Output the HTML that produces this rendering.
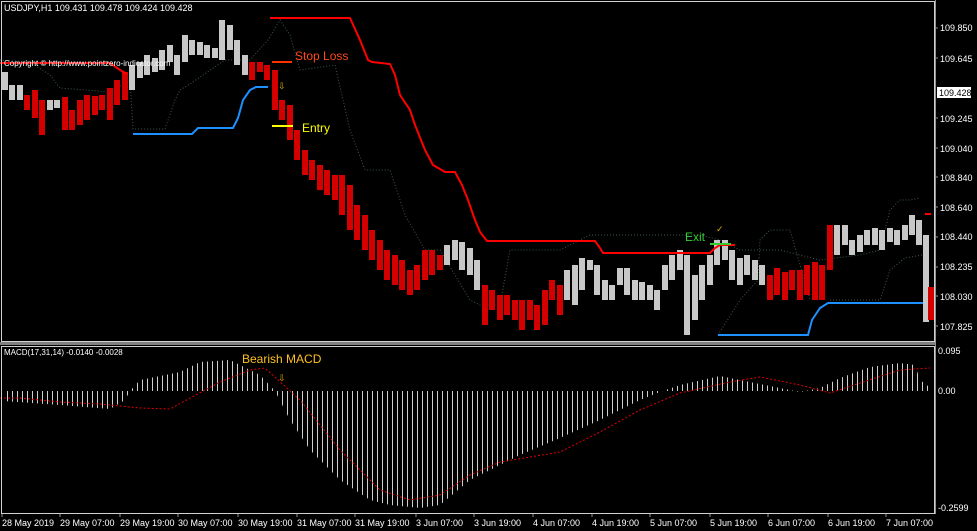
<!DOCTYPE html>
<html><head><meta charset="utf-8"><style>
html,body{margin:0;padding:0;background:#000;width:977px;height:531px;overflow:hidden}
svg{display:block}
text{font-family:"Liberation Sans",sans-serif}
</style></head><body>
<svg width="977" height="531" xmlns="http://www.w3.org/2000/svg">
<defs>
<pattern id="st" x="0" y="0" width="5" height="10" patternUnits="userSpaceOnUse">
<rect x="2" y="0" width="1" height="10" fill="#cfcfcf"/>
</pattern>
</defs>
<rect width="977" height="531" fill="#000"/>
<!-- dotted band -->
<polyline fill="none" stroke="#3a5a4a" stroke-width="1" stroke-dasharray="1,2" points="0,60 30,62 50,75 60,88 110,92 130,80 133,129 165,129 175,100 180,90 190,84 225,60 250,60 268,40 280,20 290,35 300,70 335,65 350,130 365,170 390,170 405,215 425,250 440,250 470,300 480,305 500,305 510,250 560,250 590,235 640,235 700,235 720,240 740,250 780,250 820,260 860,255 880,250 890,210 900,200 910,200 920,198"/>
<polyline fill="none" stroke="#3a5a4a" stroke-width="1" stroke-dasharray="1,2" points="718,335 740,300 758,280 760,240 770,230 790,230 810,300"/>
<polyline fill="none" stroke="#3a5a4a" stroke-width="1" stroke-dasharray="1,2" points="830,300 880,300 890,270 905,258 922,255"/>
<!-- gray bars -->
<path fill="none" stroke="#c8c8c8" stroke-width="6" d="M5 72V90M12 85V100M20 85V100M50 100V110M57 100V108
M132 65V90M140 62V78M147 55V75M155 58V72M162 50V70M170 45V62M177 55V75M185 35V62M192 40V55M200 42V55M207 45V58M215 48V58M222 20V60M230 25V50M237 40V65M245 55V75
M447 245V265M455 240V260M462 242V270M470 248V275M477 260V290
M567 270V300M575 265V305M582 258V290M590 260V270M597 265V295M605 280V300M612 285V300M620 268V285M627 268V295M635 280V300M642 282V300M650 285V300M657 290V310M665 265V290M672 255V280M680 250V270M687 255V335M695 275V320M702 265V300M710 255V285M717 240V265M725 240V260M732 250V280M740 258V285M747 255V275M755 260V280M762 265V285
M837 225V255M845 225V245M852 240V255M860 235V252M867 230V245M875 228V245M882 230V250M890 228V242M897 230V245M905 225V240M912 215V235M919 220V245M926 235V322"/>
<!-- red bars -->
<path fill="none" stroke="#d40000" stroke-width="6" d="M27 95V110M35 90V118M42 100V135M65 97V130M72 110V130M80 100V125M87 95V120M95 96V115M102 95V110M110 88V120M117 80V105M125 72V100
M252 62V80M260 62V72M267 65V80M275 70V110M282 100V120M290 105V140M297 130V160M305 150V175M312 160V180M320 165V190M327 170V195M335 175V200M342 175V215M350 185V230M357 205V240M365 215V250M372 230V260M380 240V270M387 250V280M395 255V285M402 260V290M410 270V295M417 265V290M425 250V280M432 250V275M440 255V270
M485 285V325M492 290V310M500 295V320M507 295V315M515 300V320M522 300V330M530 300V320M537 305V330M545 290V325M552 280V300M560 285V315
M770 275V300M777 268V295M785 272V300M792 270V290M800 270V300M807 265V295M815 262V300M822 265V300M830 225V270M931 287V320"/>
<!-- red stop line -->
<polyline fill="none" stroke="#ff0000" stroke-width="2" points="0,63 110,63 120,70 127,74"/>
<polyline fill="none" stroke="#ff0000" stroke-width="2" points="270,18 350,18 360,40 368,60 372,62 390,64 395,75 400,95 410,110 415,125 425,150 433,165 445,172 455,172 462,185 468,200 475,220 480,232 487,241 595,241 600,248 603,253 660,253 710,253 715,248 720,245 735,245"/>
<!-- blue -->
<polyline fill="none" stroke="#1e90ff" stroke-width="2" points="133,134 192,134 198,128 233,128 238,118 243,100 250,90 256,87 268,87"/>
<polyline fill="none" stroke="#1e90ff" stroke-width="2" points="718,335 808,335 812,320 820,308 828,303 923,303"/>
<!-- MACD -->
<polygon fill="url(#st)" points="3,391 3,401 60,405 110,409 125,400 130,391 140,380 180,372 200,362 230,360 260,375 275,391 290,420 310,450 340,480 370,500 390,505 420,508 440,505 470,480 520,455 560,438 600,420 640,400 660,392 680,385 720,376 750,382 780,388 800,392 820,388 840,378 870,367 900,363 915,365 920,380 928,386 928,391"/>
<polyline fill="none" stroke="#e00000" stroke-width="1" stroke-dasharray="2,2" points="0,398 20,398 60,402 100,404 140,408 170,409 220,382 250,370 265,368 300,400 340,450 380,490 410,500 440,495 470,475 500,462 560,452 600,432 640,410 680,393 730,382 760,377 800,385 830,393 860,383 900,370 930,368"/>
<!-- borders -->
<rect x="1.5" y="1.5" width="933" height="340" fill="none" stroke="#d0d0d0" stroke-width="1"/>
<rect x="0" y="342" width="935" height="3" fill="#808080"/>
<rect x="1.5" y="346.5" width="933" height="167" fill="none" stroke="#d0d0d0" stroke-width="1"/>
<line x1="935.5" y1="0" x2="935.5" y2="514" stroke="#909090"/>
<!-- annotations -->
<line x1="272" y1="62" x2="292" y2="62" stroke="#ff3000" stroke-width="2"/>
<text x="295" y="60" font-size="12" fill="#ff4a1a">Stop Loss</text>
<line x1="272" y1="126" x2="293" y2="126" stroke="#ffff00" stroke-width="2"/>
<text x="302" y="132" font-size="12" fill="#ffff00">Entry</text>
<text x="278" y="89" font-size="9" fill="#e0b000">⇩</text>
<text x="685" y="241" font-size="12" fill="#32cd32">Exit</text>
<line x1="710" y1="244" x2="731" y2="244" stroke="#32cd32" stroke-width="2"/>
<text x="716" y="232" font-size="9" fill="#e0b000">✓</text>
<line x1="925" y1="214" x2="931" y2="214" stroke="#ff0000" stroke-width="2"/>
<text x="4" y="66" font-size="8" fill="#ffffff">Copyright © http://www.pointzero-indicator.com</text>
<text x="4" y="11" font-size="9" fill="#ffffff">USDJPY,H1  109.431 109.478 109.424 109.428</text>
<text x="4" y="355" font-size="8" fill="#ffffff">MACD(17,31,14) -0.0140 -0.0028</text>
<text x="242" y="363" font-size="12" fill="#ffc020">Bearish MACD</text>
<text x="278" y="381" font-size="9" fill="#e0b000">⇩</text>
<!-- price axis -->
<g font-size="9" fill="#ffffff">
<text x="940" y="31">109.850</text>
<text x="940" y="62">109.645</text>
<text x="940" y="122">109.245</text>
<text x="940" y="152">109.040</text>
<text x="940" y="181">108.840</text>
<text x="940" y="211">108.640</text>
<text x="940" y="240">108.440</text>
<text x="940" y="270">108.235</text>
<text x="940" y="300">108.030</text>
<text x="940" y="330">107.825</text>
<text x="938" y="354">0.095</text>
<text x="938" y="394">0.00</text>
<text x="938" y="511">-0.2599</text>
</g>
<rect x="937" y="87" width="34" height="11" fill="#ffffff"/>
<text x="939" y="96" font-size="9" fill="#000">109.428</text>
<g stroke="#909090">
<line x1="935" y1="28" x2="938" y2="28"/><line x1="935" y1="58" x2="938" y2="58"/>
<line x1="935" y1="118" x2="938" y2="118"/><line x1="935" y1="148" x2="938" y2="148"/>
<line x1="935" y1="177" x2="938" y2="177"/><line x1="935" y1="207" x2="938" y2="207"/>
<line x1="935" y1="237" x2="938" y2="237"/><line x1="935" y1="267" x2="938" y2="267"/>
<line x1="935" y1="296" x2="938" y2="296"/><line x1="935" y1="326" x2="938" y2="326"/>
</g>
<g stroke="#909090">
<path d="M2 514v3M60 514v3M120 514v3M178 514v3M238 514v3M297 514v3M355 514v3M416 514v3M474 514v3M533 514v3M592 514v3M650 514v3M710 514v3M768 514v3M828 514v3M886 514v3"/>
</g>
<g font-size="9" fill="#ffffff">
<text x="2" y="526">28 May 2019</text>
<text x="60" y="526">29 May 07:00</text>
<text x="120" y="526">29 May 19:00</text>
<text x="178" y="526">30 May 07:00</text>
<text x="238" y="526">30 May 19:00</text>
<text x="297" y="526">31 May 07:00</text>
<text x="355" y="526">31 May 19:00</text>
<text x="416" y="526">3 Jun 07:00</text>
<text x="474" y="526">3 Jun 19:00</text>
<text x="533" y="526">4 Jun 07:00</text>
<text x="592" y="526">4 Jun 19:00</text>
<text x="650" y="526">5 Jun 07:00</text>
<text x="710" y="526">5 Jun 19:00</text>
<text x="768" y="526">6 Jun 07:00</text>
<text x="828" y="526">6 Jun 19:00</text>
<text x="886" y="526">7 Jun 07:00</text>
</g>
</svg>
</body></html>
